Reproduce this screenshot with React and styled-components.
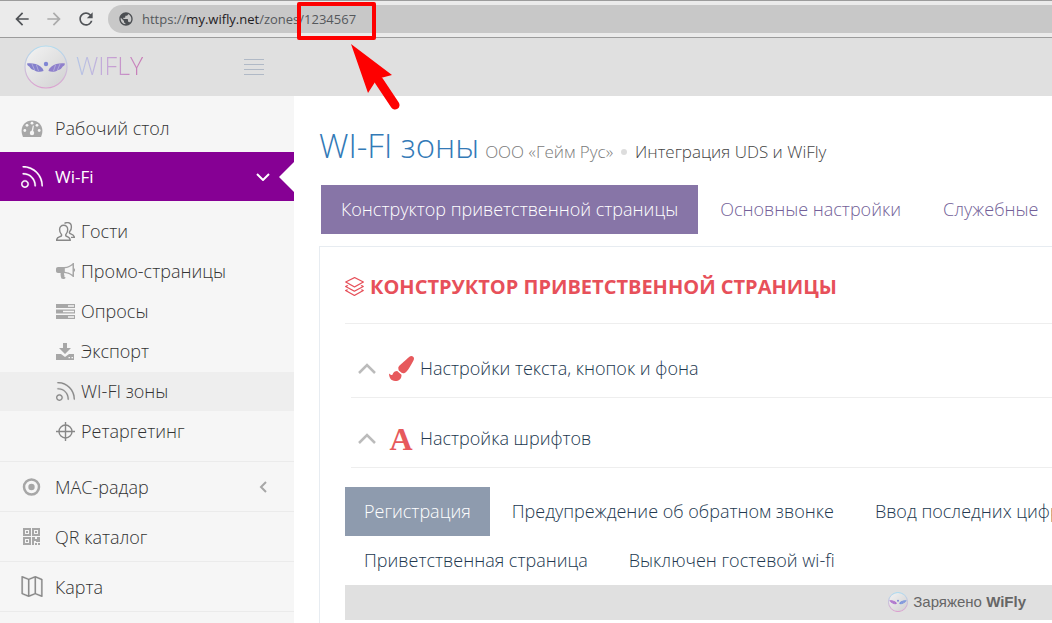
import React from "react";
import styled, { createGlobalStyle, css } from "styled-components";
import { SlFeed, SlLayers, SlMap } from "react-icons/sl";
import { FaPaintBrush } from "react-icons/fa";
import { MdArrowBack, MdArrowForward, MdRefresh, MdPublic } from "react-icons/md";

const GlobalStyle = createGlobalStyle`
  * {
    box-sizing: border-box;
  }

  body {
    margin: 0;
    background: #fff;
    font-family: "Open Sans", sans-serif;
    font-size: 18px;
    font-weight: 300;
    overflow: hidden;
  }

  a {
    color: inherit;
    text-decoration: none;
  }

  button {
    padding: 0;
    border: 0;
    background: none;
    color: inherit;
    font: inherit;
    cursor: pointer;
  }

  ul {
    margin: 0;
    padding: 0;
    list-style: none;
  }

  svg {
    display: block;
    flex: none;
  }
`;

const Page = styled.div`
  position: relative;
  min-height: 100vh;
`;

const BrowserBar = styled.div`
  display: flex;
  align-items: center;
  height: 38px;
  padding-left: 12px;
  border-top: 1px solid #9c9c9c;
  border-bottom: 1px solid #9c9c9c;
  background: #ebebeb;
`;

const NavButton = styled.button`
  display: flex;
  justify-content: center;
  width: 20px;
  margin-right: 12px;
  color: ${(props) => (props.$muted ? "#ababab" : "#505357")};
`;

const AddressBar = styled.div`
  display: flex;
  flex: 1;
  align-items: center;
  gap: 8px;
  height: 28px;
  padding-left: 10px;
  border-radius: 14px 0 0 14px;
  background: #c8c8c8;
  color: #55585c;
  font-size: 13px;
  font-weight: 400;
  white-space: nowrap;

  svg {
    color: #4b4e52;
  }

  strong {
    color: #1f2023;
    font-weight: 400;
  }
`;

const Header = styled.header`
  display: flex;
  align-items: center;
  height: 58px;
  padding-left: 24px;
  background: #e0e0e0;
`;

const Brand = styled.a`
  display: flex;
  align-items: center;
  gap: 8px;
  width: 220px;
`;

const BrandName = styled.span`
  padding-bottom: 4px;
  background: linear-gradient(90deg, #b4c6e6, #c6a4d6 50%, #c878b4);
  background-clip: text;
  color: transparent;
  font-size: 25px;
  line-height: 30px;
`;

const MenuButton = styled.button`
  display: grid;
  gap: 4px;
  width: 20px;

  span {
    height: 1px;
    background: #b0b9c6;
  }
`;

const Body = styled.div`
  display: flex;
`;

const Sidebar = styled.nav`
  flex: none;
  width: 294px;
  padding-top: 8px;
  background: #f6f6f6;
  color: #333;
`;

const MenuItem = styled.li`
  border-bottom: ${(props) => (props.$divider ? "1px solid #ebebeb" : "0")};
`;

const MenuLink = styled.a`
  position: relative;
  display: flex;
  align-items: center;
  gap: 12px;
  height: 49px;
  padding: 0 24px 0 21px;
  color: ${(props) => (props.$active ? "#fff" : "#333")};
  background: ${(props) => (props.$active ? "#860094" : "transparent")};

  > svg:first-child {
    width: 22px;
    color: ${(props) => (props.$active ? "#fff" : props.$dark ? "#888" : "#a7a7a7")};
  }

  ${(props) =>
    props.$first &&
    css`
      height: 48px;
    `}

  ${(props) =>
    props.$active &&
    css`
      font-size: 17px;
      font-weight: 400;

      &::after {
        content: "";
        position: absolute;
        right: 0;
        border: solid transparent;
        border-width: 15px 15px 15px 0;
        border-right-color: #fff;
      }
    `}
`;

const MenuText = styled.span`
  flex: 1;
`;

const SubMenu = styled.ul`
  padding: 10px 0;
  border-bottom: 1px solid #ebebeb;
`;

const SubLink = styled.a`
  display: flex;
  align-items: center;
  gap: 6px;
  height: 39px;
  margin-top: 1px;
  padding: 0 0 1px 56px;
  background: ${(props) => (props.$active ? "#eee" : "transparent")};

  svg {
    color: ${(props) => (props.$dark ? "#888" : "#a7a7a7")};
  }
`;

const Main = styled.main`
  flex: 1;
  min-width: 0;
  overflow: hidden;
  padding: 24px 0 0 25px;
`;

const PageTitle = styled.h1`
  display: flex;
  align-items: baseline;
  gap: 6px;
  margin: 0;
  color: #337ab7;
  font-size: 33px;
  font-weight: 300;
  line-height: 52px;
  white-space: nowrap;

  small {
    display: flex;
    align-items: center;
    gap: 8px;
    color: #7a7a7a;
    font-size: 17px;
    line-height: 26px;
  }

  em {
    color: #444;
    font-style: normal;
  }
`;

const Dot = styled.span`
  width: 6px;
  height: 6px;
  border-radius: 50%;
  background: #ddd;
`;

const Tabs = styled.div`
  display: flex;
  gap: ${(props) => (props.$inner ? "3px" : "2px")};
  padding: ${(props) => (props.$inner ? "0" : "13px 0 12px 2px")};
`;

const Tab = styled.button`
  flex: none;
  height: 49px;
  padding: ${(props) => (props.$inner ? "0 19px 2px" : "0 20px 2px")};
  color: ${(props) => (props.$inner ? "#22384f" : "#735f98")};
  white-space: nowrap;

  &[aria-selected="true"] {
    background: ${(props) => (props.$inner ? "#8e9bae" : "#8775a7")};
    color: #fff;
  }
`;

const Portlet = styled.section`
  padding: 16px 0 24px 25px;
  border: solid #e7ecf1;
  border-width: 1px 0 0 1px;
`;

const PortletTitle = styled.h2`
  display: flex;
  align-items: center;
  gap: 6px;
  height: 61px;
  margin: 0;
  padding-bottom: 13px;
  border-bottom: 1px solid #eee;
  color: #e7505a;
  font-size: 20px;
  font-weight: 700;
  text-transform: uppercase;
  white-space: nowrap;
`;

const Groups = styled.div`
  padding: 4px 0 19px 6px;
`;

const Group = styled.button`
  display: flex;
  align-items: center;
  width: 100%;
  height: 70px;
  padding: 12px 0 0 7px;
  border-bottom: 1px solid #eee;
  color: #22384f;
  text-align: left;
`;

const GroupIcon = styled.span`
  display: flex;
  justify-content: center;
  width: 26px;
  margin: 0 6px 0 12px;
  color: #e7595c;
`;

const GroupText = styled.span`
  padding-bottom: 2px;
`;

const LetterIcon = styled.span`
  font: 700 32px/32px "Liberation Serif", serif;
`;

const Powered = styled.footer`
  display: flex;
  align-items: center;
  justify-content: flex-end;
  gap: 5px;
  height: 35px;
  padding: 0 26px 2px 0;
  background: #e0e0e0;
  color: #666;
  font-family: "Liberation Sans", sans-serif;
  font-size: 15px;

  b {
    font-weight: 700;
  }
`;

const Highlight = styled.div`
  position: absolute;
  top: 2px;
  left: 297px;
  width: 79px;
  height: 38px;
  border: 4px solid #fe0000;
  border-radius: 2px;
`;

const Pointer = styled.svg`
  position: absolute;
  top: 43px;
  left: 350px;
`;

const LineIcon = styled.span`
  path {
    stroke: currentColor;
    stroke-width: 12;
  }
`;

const Logo = ({ size, id, left, right }) => (
  <svg width={size} height={size} viewBox="0 0 44 44" aria-hidden="true">
    <defs>
      <linearGradient id={`${id}-ring`} x1="0" y1="0" x2="0" y2="1">
        <stop offset="0" stopColor="#b0dcf0" />
        <stop offset="0.5" stopColor="#c9c4dc" />
        <stop offset="1" stopColor="#dca0cf" />
      </linearGradient>
      <linearGradient id={`${id}-ball`} x1="0" y1="0" x2="1" y2="1">
        <stop offset="0" stopColor="#f4f4f4" />
        <stop offset="1" stopColor="#d0d0d1" />
      </linearGradient>
    </defs>
    <circle cx="22" cy="22" r="21" fill={`url(#${id}-ball)`} stroke={`url(#${id}-ring)`} strokeWidth={40 / size + 0.3} />
    <circle cx="22" cy="19" r="2.2" fill="#7f86d4" />
    <path d="M3 18.500c5-.7 10 .5 13.500 3 2 1.500 3 3 3 4.500-3 1.300-7 .8-9-.8-2.500-.5-4.500-2-5-3.500-1.500-.7-2.300-1.700-2.500-3.200z" fill={left} />
    <path d="M41 18.500c-5-.7-10 .5-13.500 3-2 1.500-3 3-3 4.500 3 1.300 7 .8 9-.8 2.500-.5 4.500-2 5-3.500 1.500-.7 2.300-1.700 2.500-3.200z" fill={right} />
    <path d="M8 19l2.500 6M12.500 20l2 6M36 19l-2.500 6M31.500 20l-2 6" stroke="#b9b5dd" strokeWidth="0.8" />
  </svg>
);

const Chevron = ({ width, height, points, color, weight }) => (
  <svg width={width} height={height} fill="none" stroke={color} strokeWidth={weight} aria-hidden="true">
    <polyline points={points} />
  </svg>
);

const DashboardIcon = () => (
  <svg width="22" height="17" viewBox="0 0 22 17" aria-hidden="true">
    <path d="M2 17C-2 8 3 .5 11 .5S24 8 20 17z" fill="currentColor" />
    <g fill="#f6f6f6">
      <circle cx="3.800" cy="10.500" r="1.400" />
      <circle cx="6" cy="5.300" r="1.400" />
      <circle cx="11" cy="3.200" r="1.400" />
      <circle cx="16" cy="5.300" r="1.400" />
      <circle cx="18.200" cy="10.500" r="1.400" />
      <circle cx="11" cy="13" r="2.200" />
      <path d="M10.300 12l1.600-6.500 1 .2-1 6.800z" />
    </g>
  </svg>
);

const UsersIcon = () => (
  <svg width="19" height="19" viewBox="0 0 19 19" fill="none" stroke="currentColor" strokeWidth="1.400" aria-hidden="true">
    <path d="M.6 18.200h13.600c0-2.600-1.400-3-3.200-3.700-1.400-.5-1.700-1.500-.8-2.600 1-1.100 1.500-2.600 1.500-4.300 0-2.700-1.500-4.400-4-4.400S3.600 4.900 3.600 7.600c0 1.700.5 3.200 1.500 4.300.9 1.100.6 2.100-.8 2.600-1.900.7-3.700 1.100-3.700 3.700z" />
    <path d="M8.500 1.500C9.300.8 10.300.6 11.300.6c2.600 0 4.100 1.700 4.100 4.300 0 1.700-.5 3.300-1.500 4.400-.9 1-.6 2 .8 2.500 2 .7 3.600 1.200 3.700 3.600H15" />
  </svg>
);

const BullhornIcon = () => (
  <svg width="19" height="17" viewBox="0 0 19 17" aria-hidden="true">
    <path
      d="M2 4h6c4 0 7-1.700 9-4h1v5.500a1.500 1.500 0 0 1 0 3V14h-1c-2-2-5-3.700-8.500-4-.8.6-.7 1.500 0 2.200-.6 1 0 1.700 1.200 2.500-.6 1.500-3.200 1.600-4.300.8C4.800 13.800 4.300 12 4.700 10H2C.8 10 0 9.200 0 8V6c0-1.200.8-2 2-2zm6.800 1.300v3.400c3 .3 5.700 1.500 7.700 3.100V2.200c-2 1.600-4.700 2.800-7.700 3.100z"
      fill="currentColor"
      fillRule="evenodd"
    />
  </svg>
);

const TasksIcon = () => (
  <svg width="19" height="15" viewBox="0 0 19 15" fill="currentColor" aria-hidden="true">
    <path
      d="M0 0h19v4H0zM0 5.500h19v4H0zM0 11h19v4H0zM12 1.200v1.600h6V1.200zM7 6.700v1.600h11V6.700zM12 12.200v1.600h6v-1.600z"
      fillRule="evenodd"
    />
  </svg>
);

const DownloadIcon = () => (
  <svg width="19" height="17" viewBox="0 0 19 17" fill="currentColor" aria-hidden="true">
    <path d="M7 0h4v5h4l-6 6-6-6h4z" />
    <path d="M0 11h5l4 3 4-3h5v6H0zM12.500 14v1.300H14V14zM15.500 14v1.300H17V14z" fillRule="evenodd" />
  </svg>
);

const CrosshairIcon = () => (
  <svg width="19" height="19" viewBox="0 0 19 19" fill="none" stroke="currentColor" strokeWidth="1.400" aria-hidden="true">
    <circle cx="9.500" cy="9.500" r="6.500" />
    <path d="M9.500 0v19M0 9.500h19" />
  </svg>
);

const RadarIcon = () => (
  <svg width="22" height="18" viewBox="0 0 22 18" fill="none" stroke="currentColor" aria-hidden="true">
    <circle cx="10.500" cy="9" r="7.500" strokeWidth="2.500" />
    <circle cx="10.500" cy="9" r="3.200" fill="currentColor" stroke="none" />
  </svg>
);

const QrIcon = () => (
  <svg width="22" height="17" viewBox="0 0 22 17" fill="currentColor" aria-hidden="true">
    <path
      d="M2 0h8v8H2zM4 2v4h4V2zM11 0h8v8h-8zM13 2v4h4V2zM2 9h8v8H2zM4 11v4h4v-4zM5 3h2v2H5zM14 3h2v2h-2zM5 12h2v2H5zM11 9h3v2h2V9h3v5h-4v-1h-2v4h-2zM14 15h2v2h-2zM17 15h2v2h-2z"
      fillRule="evenodd"
    />
  </svg>
);

const FeedIcon = ({ size }) => (
  <LineIcon>
    <SlFeed size={size} />
  </LineIcon>
);

const subItems = [
  { text: "Гости", icon: <UsersIcon />, dark: true },
  { text: "Промо-страницы", icon: <BullhornIcon /> },
  { text: "Опросы", icon: <TasksIcon /> },
  { text: "Экспорт", icon: <DownloadIcon /> },
  { text: "WI-FI зоны", icon: <FeedIcon size={19} />, dark: true, active: true },
  { text: "Ретаргетинг", icon: <CrosshairIcon />, dark: true },
];

const innerTabs = [
  ["Регистрация", "Предупреждение об обратном звонке", "Ввод последних цифр"],
  ["Приветственная страница", "Выключен гостевой wi-fi"],
];

const Browser = () => (
  <BrowserBar>
    <NavButton aria-label="Назад">
      <MdArrowBack size={20} />
    </NavButton>
    <NavButton aria-label="Вперёд" $muted>
      <MdArrowForward size={20} />
    </NavButton>
    <NavButton aria-label="Обновить">
      <MdRefresh size={20} />
    </NavButton>
    <AddressBar>
      <MdPublic size={16} />
      <span>
        https://<strong>my.wifly.net</strong>/zones/1234567
      </span>
    </AddressBar>
  </BrowserBar>
);

const SideMenu = () => (
  <Sidebar>
    <ul>
      <MenuItem>
        <MenuLink href="#dashboard" $first>
          <DashboardIcon />
          <MenuText>Рабочий стол</MenuText>
        </MenuLink>
      </MenuItem>
      <MenuItem>
        <MenuLink href="#wifi" $active>
          <FeedIcon size={22} />
          <MenuText>Wi-Fi</MenuText>
          <Chevron width="14" height="8" points="1,1 7,7 13,1" color="#fff" weight="2" />
        </MenuLink>
        <SubMenu>
          {subItems.map((item) => (
            <li key={item.text}>
              <SubLink href="#wifi" $active={item.active} $dark={item.dark}>
                {item.icon}
                {item.text}
              </SubLink>
            </li>
          ))}
        </SubMenu>
      </MenuItem>
      <MenuItem $divider>
        <MenuLink href="#radar">
          <RadarIcon />
          <MenuText>MAC-радар</MenuText>
          <Chevron width="14" height="12" points="10,1 5,6 10,11" color="#a7a7a7" weight="2" />
        </MenuLink>
      </MenuItem>
      <MenuItem $divider>
        <MenuLink href="#qr">
          <QrIcon />
          <MenuText>QR каталог</MenuText>
        </MenuLink>
      </MenuItem>
      <MenuItem $divider>
        <MenuLink href="#map" $dark>
          <SlMap size={21} stroke="currentColor" strokeWidth="10" />
          <MenuText>Карта</MenuText>
        </MenuLink>
      </MenuItem>
    </ul>
  </Sidebar>
);

const GroupRow = ({ icon, children }) => (
  <Group aria-expanded="false">
    <Chevron width="18" height="11" points="1,10 9,2 17,10" color="#bbb" weight="2.500" />
    <GroupIcon aria-hidden="true">{icon}</GroupIcon>
    <GroupText>{children}</GroupText>
  </Group>
);

const App = () => (
  <Page>
    <GlobalStyle />
    <Browser />
    <Header>
      <Brand href="#home">
        <Logo size={44} id="brand" left="#8480cc" right="#8f80cc" />
        <BrandName>WIFLY</BrandName>
      </Brand>
      <MenuButton aria-label="Меню">
        <span />
        <span />
        <span />
        <span />
      </MenuButton>
    </Header>

    <Body>
      <SideMenu />

      <Main>
        <PageTitle>
          WI-FI зоны
          <small>
            ООО «Гейм Рус» <Dot /> <em>Интеграция UDS и WiFly</em>
          </small>
        </PageTitle>

        <Tabs role="tablist">
          <Tab role="tab" aria-selected="true">
            Конструктор приветственной страницы
          </Tab>
          <Tab role="tab" aria-selected="false">
            Основные настройки
          </Tab>
          <Tab role="tab" aria-selected="false">
            Служебные
          </Tab>
        </Tabs>

        <Portlet>
          <PortletTitle>
            <SlLayers size={19} />
            Конструктор приветственной страницы
          </PortletTitle>

          <Groups>
            <GroupRow icon={<FaPaintBrush size={25} />}>Настройки текста, кнопок и фона</GroupRow>
            <GroupRow icon={<LetterIcon>A</LetterIcon>}>Настройка шрифтов</GroupRow>
          </Groups>

          <div role="tablist">
            {innerTabs.map((row) => (
              <Tabs key={row[0]} role="presentation" $inner>
                {row.map((text) => (
                  <Tab key={text} role="tab" aria-selected={text === "Регистрация"} $inner>
                    {text}
                  </Tab>
                ))}
              </Tabs>
            ))}
          </div>

          <Powered>
            <Logo size={20} id="powered" left="#b070cc" right="#7a96dc" />
            <span>
              Заряжено <b>WiFly</b>
            </span>
          </Powered>
        </Portlet>
      </Main>
    </Body>

    <Highlight />
    <Pointer width="52" height="68" viewBox="0 0 52 68" aria-hidden="true">
      <path d="M1 1l41 31-15 4-9 14z" fill="#fe0000" />
      <path d="M29 38l16 24" stroke="#fe0000" strokeWidth="9" strokeLinecap="round" />
    </Pointer>
  </Page>
);

export default App;
